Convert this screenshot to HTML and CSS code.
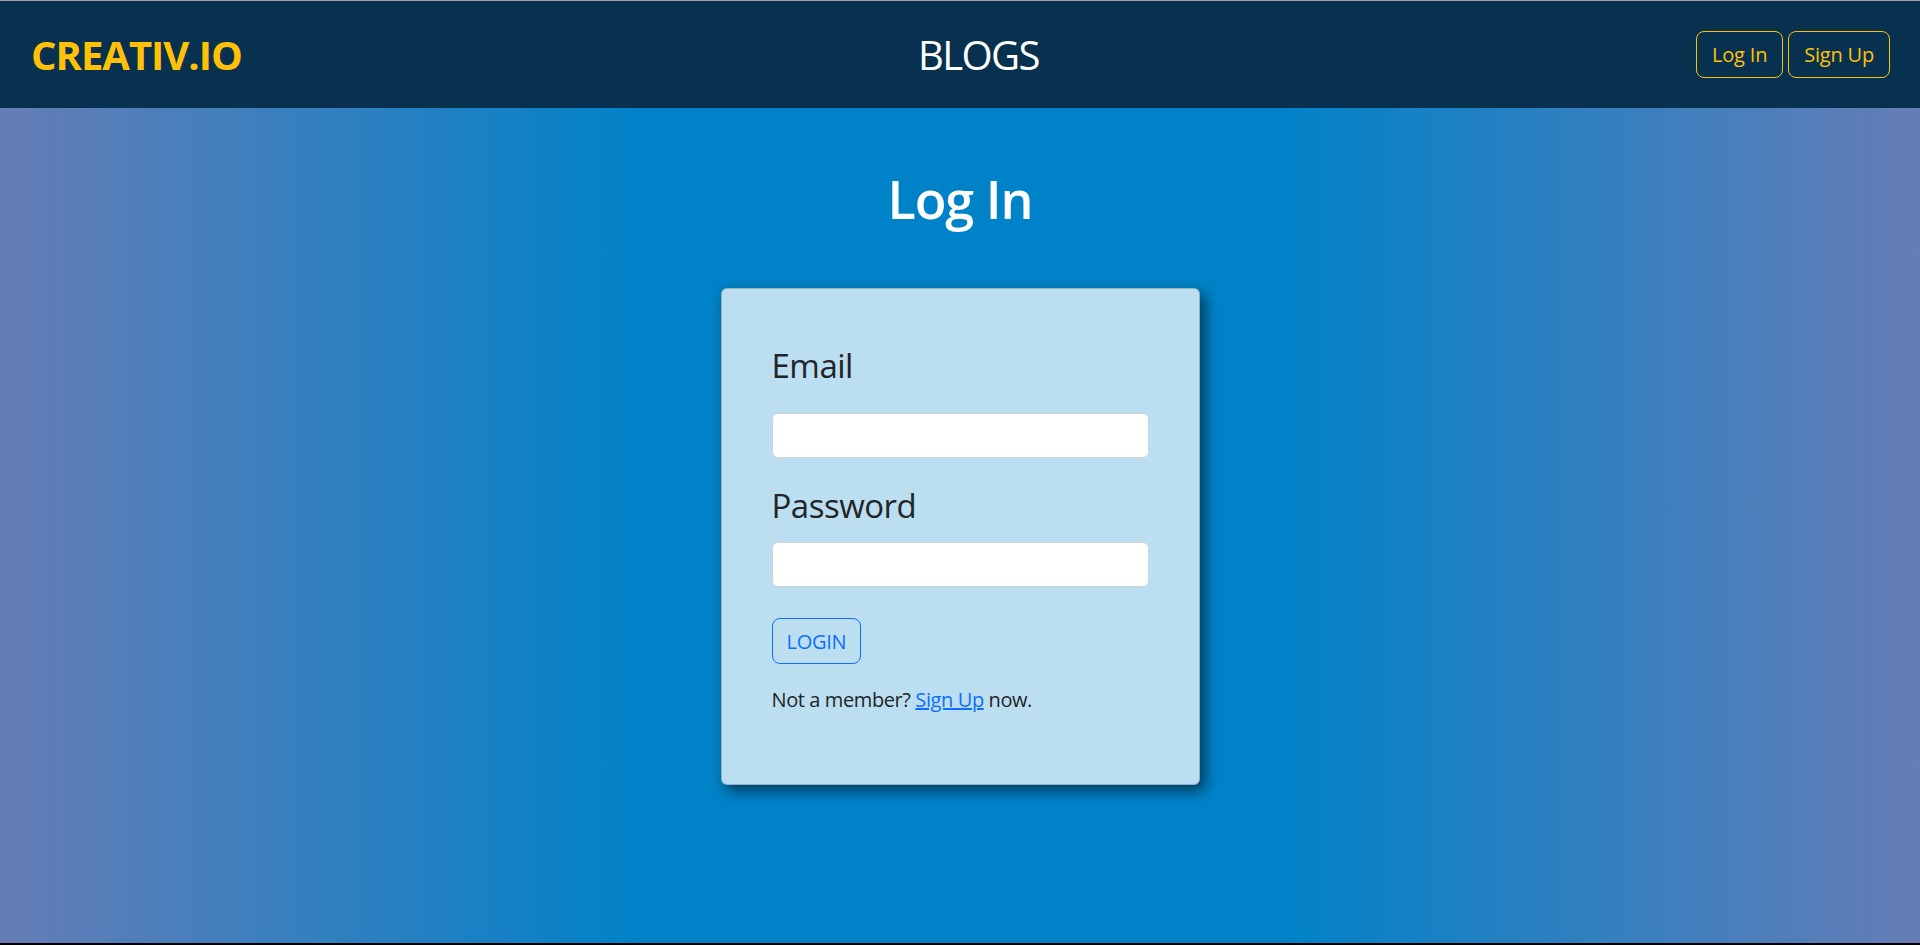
FILE: index.html
```html
<!DOCTYPE html>
<html lang="en">
<head>
<meta charset="utf-8">
<title>Creativ.io - Log In</title>
<link rel="stylesheet" href="styles.css">
</head>
<body>
<div class="page">
  <header class="topbar">
    <a class="brand" href="#">CREATIV.IO</a>
    <a class="blogs" href="#">BLOGS</a>
    <nav class="auth">
      <a class="btn-warn" href="#">Log In</a>
      <a class="btn-warn" href="#">Sign Up</a>
    </nav>
  </header>
  <main class="main">
    <h1 class="title">Log In</h1>
    <form class="card">
      <label class="label label-email" for="email">Email</label>
      <input class="input input-email" id="email" type="email">
      <label class="label label-pass" for="pass">Password</label>
      <input class="input input-pass" id="pass" type="password">
      <button class="btn-login" type="button">LOGIN</button>
      <p class="note">Not a member? <a href="#">Sign Up</a> now.</p>
    </form>
  </main>
</div>
</body>
</html>
```

FILE: styles.css
```css
* { box-sizing: border-box; }
html, body { margin: 0; padding: 0; }
body {
  font-family: "Open Sans", "Noto Sans", "Liberation Sans", sans-serif;
  color: #212529;
}
.page {
  height: 945px;
  display: flex;
  flex-direction: column;
  border-top: 1px solid #a3a3a3;
  border-bottom: 2px solid #000;
}
.topbar {
  height: 107px;
  flex: none;
  background: #083150;
  display: grid;
  grid-template-columns: 1fr auto 1fr;
  align-items: center;
  padding: 0 30px 0 31px;
}
.brand {
  color: #ffc107;
  font-weight: 700;
  font-size: 40px;
  line-height: 48px;
  text-decoration: none;
  justify-self: start;
  letter-spacing: -1px;
}
.blogs {
  color: #fff;
  font-size: 40px;
  line-height: 48px;
  text-decoration: none;
  margin-left: 36px;
  letter-spacing: -1.6px;
}
.auth {
  justify-self: end;
  display: flex;
  gap: 5px;
}
.btn-warn {
  display: flex;
  align-items: center;
  height: 47px;
  padding: 0 15px;
  border: 1px solid #ffc107;
  border-radius: 8px;
  color: #ffc107;
  font-size: 20px;
  text-decoration: none;
  letter-spacing: -0.2px;
}
.main {
  flex: 1;
  background: linear-gradient(to right, #667db6, #0082c8, #0082c8, #667db6);
  display: flex;
  flex-direction: column;
  align-items: center;
}
.title {
  margin: 60px 0 0;
  color: #fff;
  font-size: 52px;
  line-height: 62px;
  font-weight: 600;
  letter-spacing: -1px;
}
.card {
  margin-top: 58px;
  width: 479px;
  background: #bbdef0;
  border: 1px solid rgba(0, 0, 0, 0.2);
  border-radius: 6px;
  padding: 50px;
  display: flex;
  flex-direction: column;
  align-items: flex-start;
  box-shadow: 5px 6px 14px rgba(0, 0, 0, 0.55);
}
.label {
  display: block;
  font-size: 33px;
  line-height: 41px;
  letter-spacing: -0.5px;
}
.label-email { margin-top: 6px; }
.label-pass { margin-top: 27px; }
.input {
  width: 100%;
  height: 45px;
  border: 1px solid #ced4da;
  border-radius: 6px;
  background: #fff;
  font-size: 20px;
  padding: 0 16px;
}
.input-email { margin-top: 27px; }
.input-pass { margin-top: 16px; }
.btn-login {
  margin-top: 31px;
  height: 46px;
  padding: 0 14px;
  background: transparent;
  border: 1px solid #0d6efd;
  border-radius: 8px;
  color: #0d6efd;
  font-family: inherit;
  font-size: 20px;
  letter-spacing: -0.3px;
}
.note {
  margin: 21px 0 19px;
  font-size: 20px;
  line-height: 30px;
  letter-spacing: -0.4px;
}
.note a { color: #0d6efd; }
```
